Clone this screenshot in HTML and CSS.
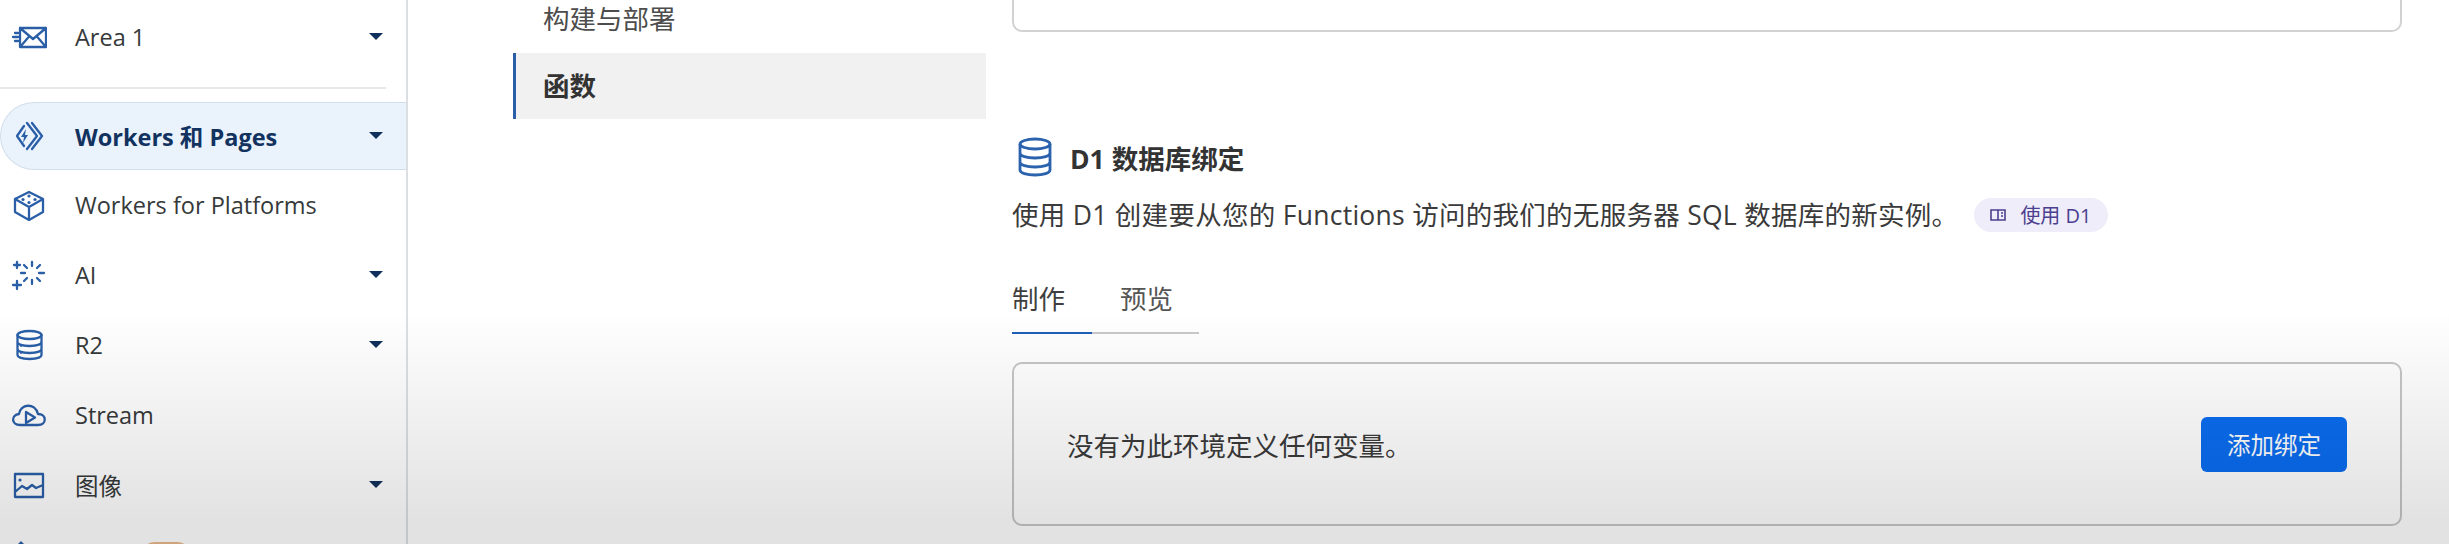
FILE: index.html
```html
<!DOCTYPE html>
<html lang="zh">
<head>
<meta charset="utf-8">
<title>D1 数据库绑定</title>
<link rel="stylesheet" href="styles.css">
</head>
<body>
<div class="page">
  <aside class="sidebar">
    <div class="nav-item first">
      <svg class="ico" viewBox="0 0 36 32"><path d="M9 7h26v19H9zM9 7l13 11L35 7M9 26l9.500-11M35 26l-9.500-11M4 12h3M2 16h5M4 20h3"/></svg>
      <span class="label">Area 1</span><i class="caret"></i>
    </div>
    <div class="divider"></div>
    <div class="nav-item active">
      <svg class="ico" viewBox="0 0 36 32"><path d="M13 6 6 16l7 10M16 3l10 13-10 13M21 3l10 13-10 13"/><path class="fill" d="M15 9l-5 8h3l-1 6 5-8h-3z"/></svg>
      <span class="label">Workers 和 Pages</span><i class="caret"></i>
    </div>
    <div class="nav-item">
      <svg class="ico" viewBox="0 0 36 32"><path d="M18 3 32 10v13L18 31 4 23V10zM4 10l14 8 14-8M18 18v13"/><circle class="fill" cx="18" cy="7" r="1.600"/><circle class="fill" cx="12" cy="10.500" r="1.600"/><circle class="fill" cx="24" cy="10.500" r="1.600"/><circle class="fill" cx="18" cy="13.500" r="1.600"/></svg>
      <span class="label">Workers for Platforms</span>
    </div>
    <div class="nav-item">
      <svg class="ico" viewBox="0 0 36 32"><path d="M21 3v4M21 21v4M10 14h4M28 14h5M13 6l3 3M29 6l-3 3M13 22l3-3M29 22l-3-3M6 22v8M2 26h8M6 3v6M3 6h6"/></svg>
      <span class="label">AI</span><i class="caret"></i>
    </div>
    <div class="nav-item">
      <svg class="ico" viewBox="0 0 36 32"><ellipse cx="18.500" cy="6" rx="12" ry="4"/><path d="M6.500 6v20c0 2.500 5.500 4 12 4s12-1.500 12-4V6M6.500 13c0 2.500 5.500 4 12 4s12-1.500 12-4M6.500 20c0 2.500 5.500 4 12 4s12-1.500 12-4"/><circle class="fill" cx="10" cy="17" r="1"/><circle class="fill" cx="10" cy="24" r="1"/></svg>
      <span class="label">R2</span><i class="caret"></i>
    </div>
    <div class="nav-item">
      <svg class="ico" viewBox="0 0 36 32"><path d="M9 26c-9 0-9-10-1-11C9 5 24 3 27 15c9 0 9 11 0 11z"/><path d="M15 13l9 5.500-9 5.500z"/></svg>
      <span class="label">Stream</span>
    </div>
    <div class="nav-item">
      <svg class="ico" viewBox="0 0 36 32"><path d="M4 5h28v23H4zM4 23l7-6 5 3 5-4 4 3 7-3"/><circle class="fill" cx="9" cy="11" r="1.600"/></svg>
      <span class="label">图像</span><i class="caret"></i>
    </div>
    <div class="nav-item peek">
      <svg class="ico" viewBox="0 0 36 32"><path class="fill" d="M6 6l4-4 4 4v8H6z"/></svg>
      <span class="badge"></span>
    </div>
  </aside>

  <nav class="subnav">
    <div class="sub-item">构建与部署</div>
    <div class="sub-item current">函数</div>
  </nav>

  <main class="content">
    <div class="prev-card"></div>
    <section class="binding">
      <h2 class="title">
        <svg class="title-ico" viewBox="0 0 36 40"><ellipse cx="18" cy="7" rx="15" ry="5"/><path d="M3 7v26c0 3 6.500 5 15 5s15-2 15-5V7M3 16c0 3 6.500 5 15 5s15-2 15-5M3 25c0 3 6.500 5 15 5s15-2 15-5"/></svg>
        D1 数据库绑定
      </h2>
      <div class="desc">
        <span>使用 D1 创建要从您的 Functions 访问的我们的无服务器 SQL 数据库的新实例。</span>
        <span class="pill">
          <svg class="pill-ico" viewBox="0 0 16 14"><path d="M1 2h14v10H1zM8 2v10M11 5h2M11 8h2"/></svg>
          使用 D1
        </span>
      </div>
      <div class="tabs">
        <div class="tab on">制作</div>
        <div class="tab">预览</div>
      </div>
      <div class="panel">
        <span>没有为此环境定义任何变量。</span>
        <button class="btn">添加绑定</button>
      </div>
    </section>
  </main>
</div>
<div class="shade"></div>
</body>
</html>
```
FILE: styles.css
```css
* { box-sizing: border-box; }
html, body { margin: 0; height: 544px; overflow: hidden; background: #fff; }
body {
  position: relative;
  font-family: "Open Sans", "Noto Sans CJK SC", sans-serif;
  color: #36393a;
}
.page { display: flex; height: 544px; overflow: hidden; }

.sidebar {
  width: 408px;
  flex: none;
  border-right: 2px solid #dcdfe2;
  padding-top: 7px;
}
.nav-item {
  display: flex;
  align-items: center;
  height: 70px;
  font-size: 23.500px;
  color: #36393a;
  position: relative;
}
.nav-item.first { height: 60px; }
.ico {
  width: 36px;
  height: 32px;
  margin-left: 11px;
  margin-right: 28px;
  flex: none;
  fill: none;
  stroke: #2a5fa8;
  stroke-width: 2.300;
  stroke-linejoin: round;
  stroke-linecap: round;
}
.fill { fill: #2a5fa8; stroke: none; }
.caret {
  position: absolute;
  right: 23px;
  top: 50%;
  margin-top: -4px;
  border: 7px solid transparent;
  border-top: 7px solid #0f2f5c;
  border-bottom: 0;
}
.divider { height: 2px; width: 386px; background: #e6e8ea; margin-top: 20px; margin-bottom: 13px; }
.nav-item.active {
  height: 68px;
  background: #eaf2fc;
  border: 1px solid #d2deeb;
  border-right: 0;
  border-radius: 34px 0 0 34px;
  color: #12325f;
  font-weight: 700;
}
.nav-item.active .ico { margin-left: 10px; }
.badge {
  position: absolute;
  left: 140px;
  top: 22px;
  width: 52px;
  height: 30px;
  border-radius: 15px;
  background: #eab88c;
}

.subnav { width: 473px; margin-left: 105px; flex: none; padding-top: 3px; }
.sub-item { font-size: 26.500px; line-height: 32px; padding-left: 30px; color: #4d4d4d; height: 50px; }
.sub-item.current {
  height: 66px;
  line-height: 66px;
  background: #f1f1f1;
  border-left: 3px solid #2a5fa8;
  padding-left: 27px;
  color: #333;
  font-weight: 700;
}

.content { width: 1390px; margin-left: 26px; flex: none; }
.prev-card {
  height: 32px;
  border: 2px solid #d2d2d2;
  border-top: 0;
  border-radius: 0 0 10px 10px;
}
.binding { padding-top: 105px; }
.title {
  display: flex;
  align-items: center;
  gap: 17px;
  margin: 0;
  height: 40px;
  font-size: 26.500px;
  font-weight: 700;
  color: #333;
  padding-left: 5px;
}
.title-ico {
  width: 36px;
  height: 40px;
  fill: none;
  stroke: #2a62ad;
  stroke-width: 2.800;
}
.desc {
  display: flex;
  align-items: center;
  gap: 16px;
  height: 44px;
  margin-top: 14px;
  font-size: 26.500px;
  letter-spacing: 0.280px;
  color: #3a3a3a;
}
.pill {
  display: inline-flex;
  align-items: center;
  gap: 14px;
  height: 34px;
  margin-top: 3px;
  padding: 0 16px;
  border-radius: 17px;
  background: #efedf9;
  color: #4b3f8f;
  font-size: 20px;
  letter-spacing: 0;
}
.pill-ico { width: 16px; height: 14px; fill: none; stroke: #4b3f8f; stroke-width: 1.600; }
.tabs {
  display: flex;
  width: 187px;
  margin-top: 46px;
  height: 53px;
  border-bottom: 2px solid #c8c8c8;
}
.tab { width: 80px; flex: none; font-size: 26.500px; line-height: 36px; color: #555; position: relative; }
.tab.on { margin-right: 28px; color: #3f3f3f; }
.tab.on::after {
  content: "";
  position: absolute;
  left: 0;
  right: 0;
  bottom: -2px;
  height: 2px;
  background: #1f5fb8;
}
.panel {
  display: flex;
  align-items: center;
  justify-content: space-between;
  width: 1390px;
  height: 164px;
  margin-top: 28px;
  padding: 0 53px;
  border: 2px solid #c6c6c6;
  border-radius: 10px;
  font-size: 26.500px;
  color: #3a3a3a;
}
.btn {
  width: 146px;
  height: 55px;
  border: 0;
  border-radius: 6px;
  background: #0a6cf0;
  color: #fff;
  font-family: inherit;
  font-size: 23.500px;
}
.shade {
  position: absolute;
  inset: 0;
  pointer-events: none;
  background: linear-gradient(to bottom, rgba(0,0,0,0) 310px, rgba(0,0,0,.115) 520px);
}
```
